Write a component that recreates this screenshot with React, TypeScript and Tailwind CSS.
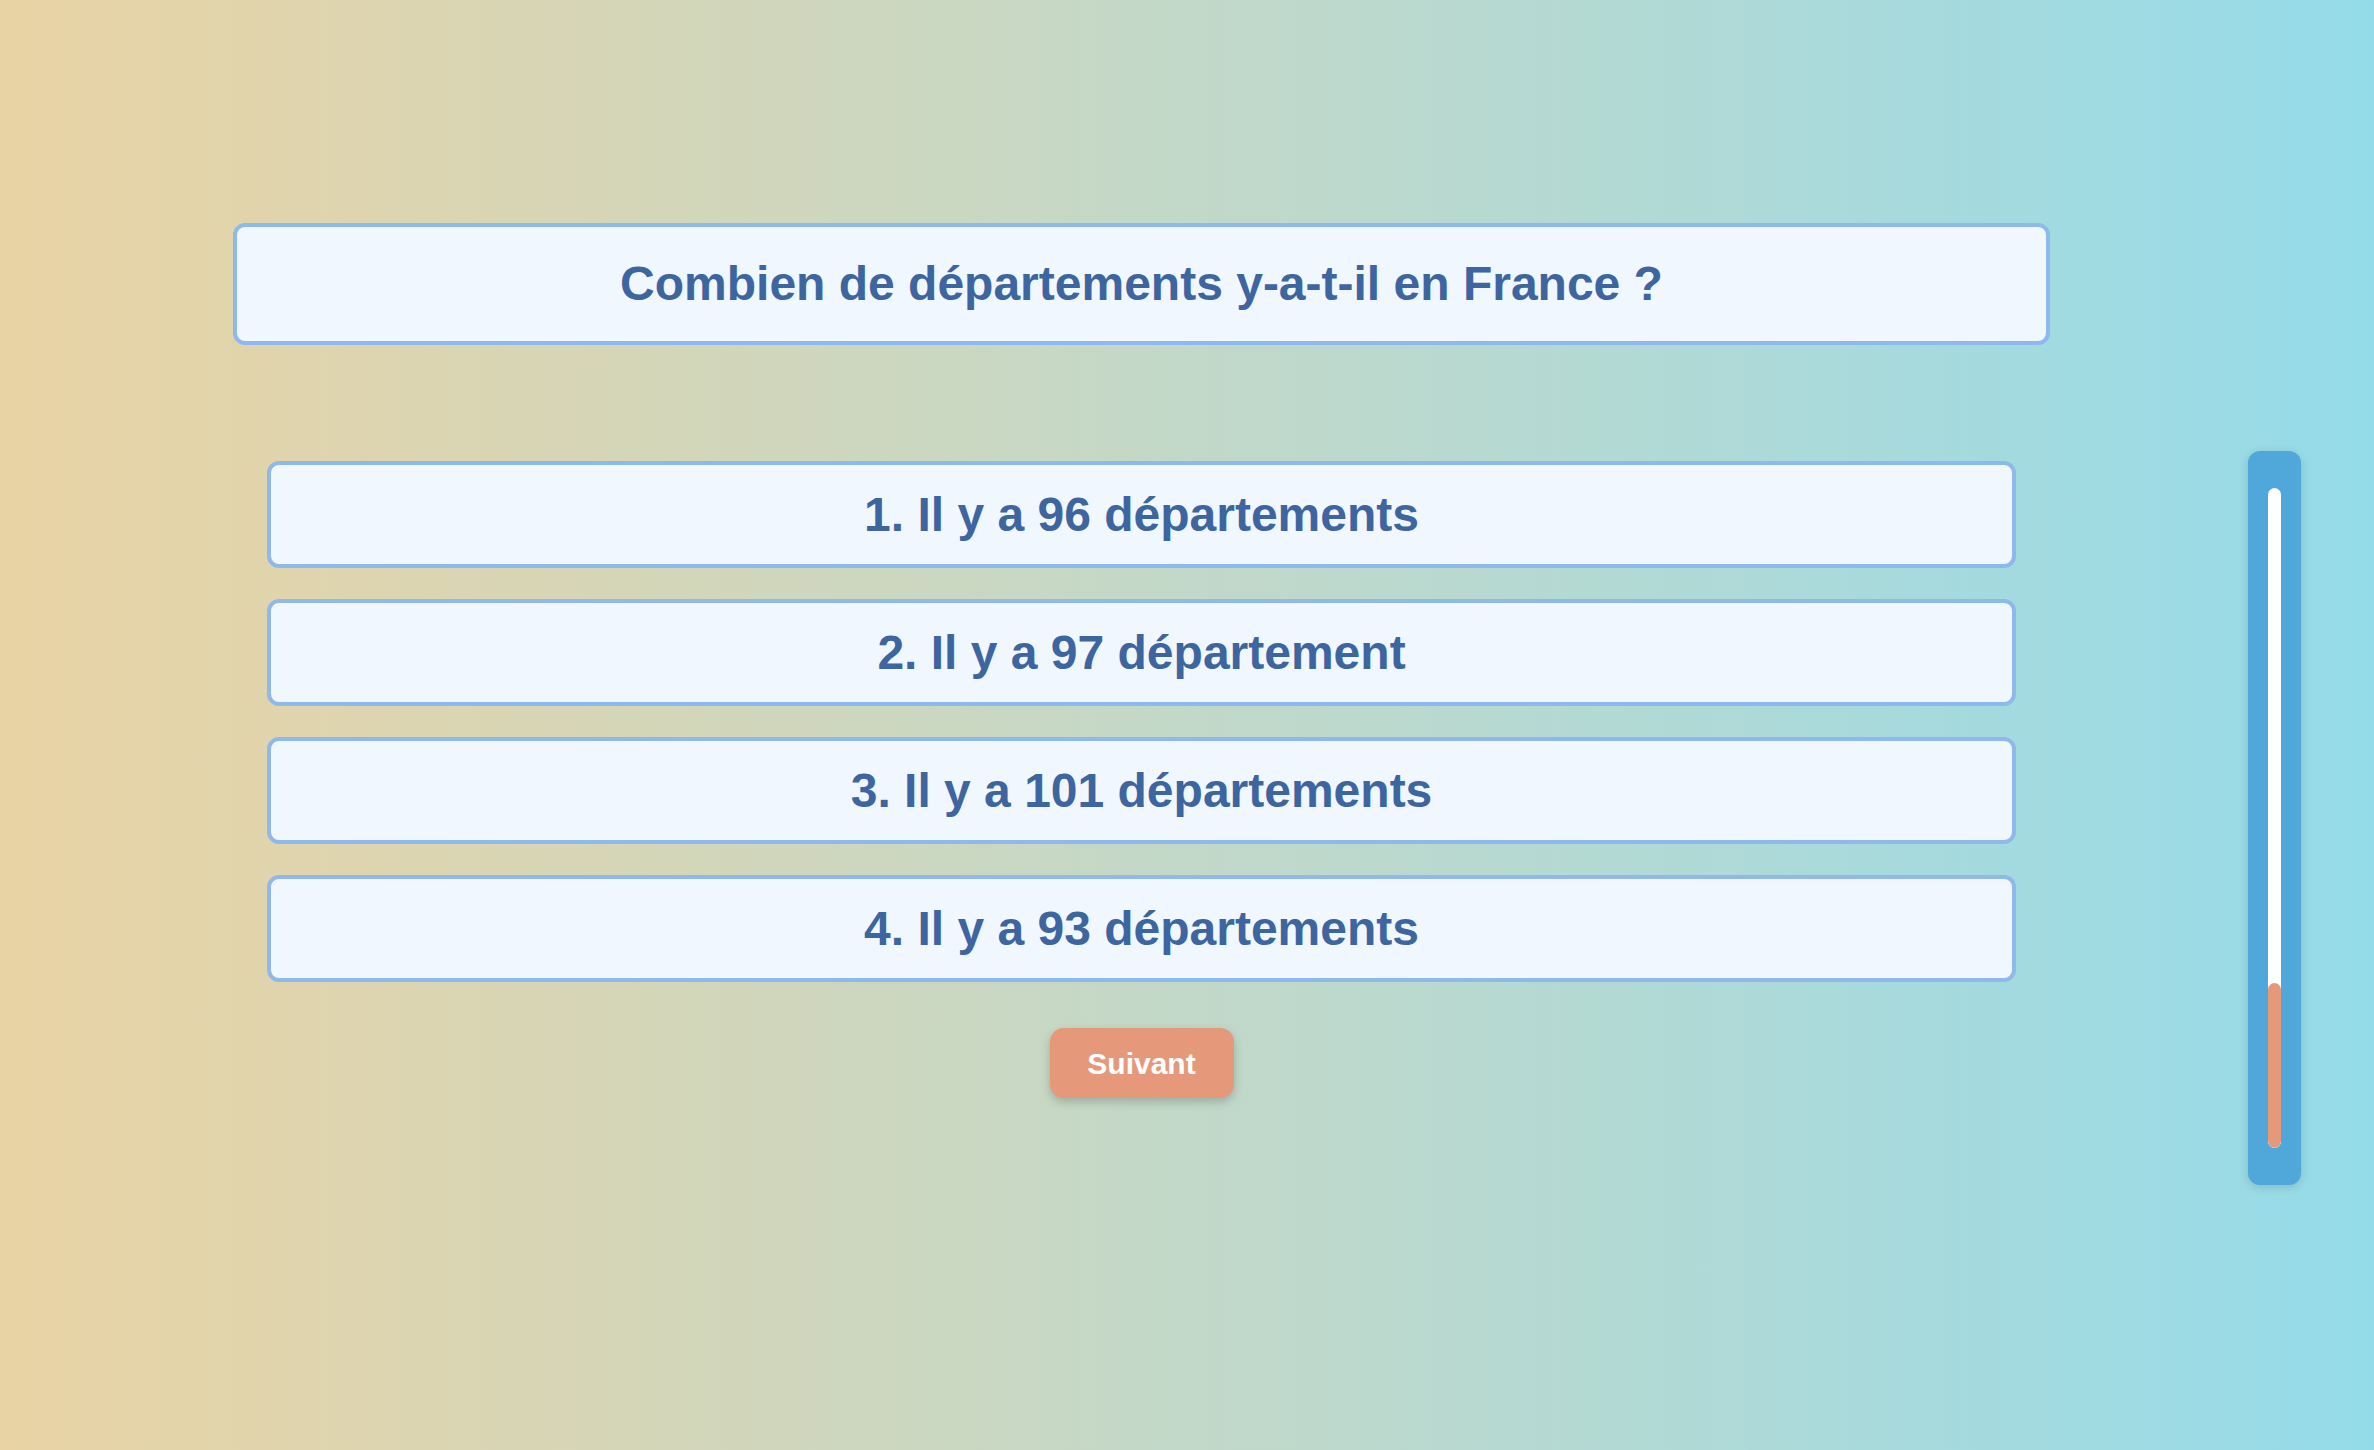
import React from "react";

const answers = [
  "1. Il y a 96 départements",
  "2. Il y a 97 département",
  "3. Il y a 101 départements",
  "4. Il y a 93 départements",
];

export default function App() {
  return (
    <div
      className="flex min-h-screen w-full items-start bg-gradient-to-r from-[#e9d3a4] to-[#94dbe9]"
      style={{ fontFamily: '"Liberation Sans", Arial, sans-serif' }}
    >
      <div className="ml-[233px] mt-[223px] flex w-[1817px] flex-col">
        <div className="flex h-[122px] items-center justify-center rounded-[12px] border-4 border-[#8fb8ec] bg-[#f0f7fe]">
          <h1 className="text-[48px] font-bold text-[#3d66a0]">
            Combien de départements y-a-t-il en France ?
          </h1>
        </div>
        <div className="mx-[34px] mt-[116px] flex flex-col gap-[31px]">
          {answers.map((a) => (
            <button
              key={a}
              className="flex h-[107px] items-center justify-center rounded-[12px] border-4 border-[#8fb8ec] bg-[#f0f7fe]"
            >
              <span className="text-[48px] font-bold text-[#3d66a0]">{a}</span>
            </button>
          ))}
        </div>
        <button className="mt-[46px] flex h-[70px] w-[184px] items-center justify-center self-center rounded-[14px] bg-[#e5997a] text-[30px] font-bold text-white shadow-[0_4px_10px_rgba(0,0,0,0.2)]">
          Suivant
        </button>
      </div>
      <div className="ml-auto mr-[73px] mt-[451px] flex h-[734px] w-[53px] justify-center rounded-[12px] bg-[#4fa7da] py-[37px] shadow-[0_2px_10px_rgba(0,0,0,0.15)]">
        <div className="flex h-full w-[13px] flex-col justify-end overflow-hidden rounded-full bg-white">
          <div className="h-[25%] w-full rounded-full bg-[#e5997a]" />
        </div>
      </div>
    </div>
  );
}
